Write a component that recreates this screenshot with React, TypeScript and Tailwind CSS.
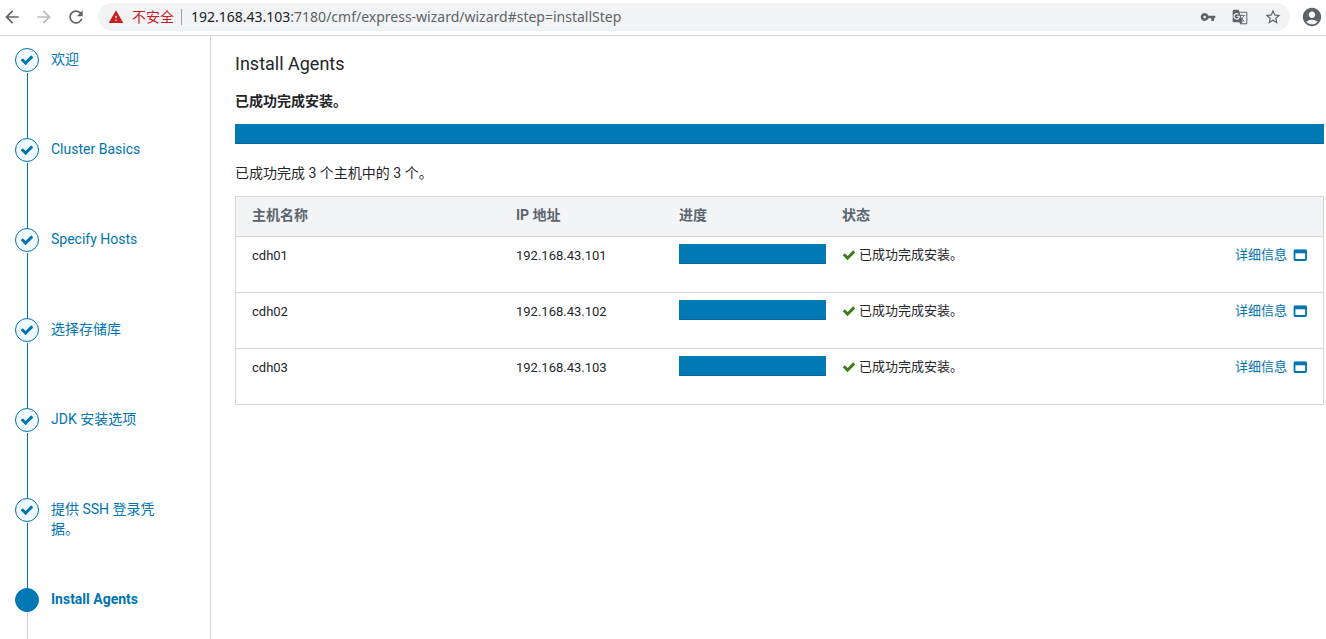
import {
  MdAccountCircle,
  MdArrowBack,
  MdArrowForward,
  MdGTranslate,
  MdRefresh,
  MdStarBorder,
  MdVpnKey,
  MdWarning,
} from "react-icons/md";
import clsx from "clsx";

const steps = [
  { label: "欢迎", done: true },
  { label: "Cluster Basics", done: true },
  { label: "Specify Hosts", done: true },
  { label: "选择存储库", done: true },
  { label: "JDK 安装选项", done: true },
  { label: "提供 SSH 登录凭据。", done: true },
  { label: "Install Agents", done: false },
];

const hosts = [
  { name: "cdh01", ip: "192.168.43.101", progress: 100, status: "已成功完成安装。" },
  { name: "cdh02", ip: "192.168.43.102", progress: 100, status: "已成功完成安装。" },
  { name: "cdh03", ip: "192.168.43.103", progress: 100, status: "已成功完成安装。" },
];

function CheckIcon({ className }: { className?: string }) {
  return (
    <svg className={clsx("size-3.5 shrink-0", className)} viewBox="0 0 1792 1792" fill="currentColor">
      <path d="M1671 566q0 40-28 68l-724 724-136 136q-28 28-68 28t-68-28l-136-136-362-362q-28-28-28-68t28-68l136-136q28-28 68-28t68 28l294 295 656-657q28-28 68-28t68 28l136 136q28 28 28 68z" />
    </svg>
  );
}

function WindowIcon() {
  return (
    <svg width="14" height="12" viewBox="0 0 14 12" fill="none">
      <rect x="1.5" y="1.5" width="11.5" height="9.5" rx="0.5" stroke="currentColor" strokeWidth="1.8" />
      <path d="M1 2.6h12.5" stroke="currentColor" strokeWidth="3.4" />
    </svg>
  );
}

function BrowserBar() {
  return (
    <header className="flex h-9 shrink-0 items-start border-b border-[#d5d7da] bg-white pt-[3px] pr-[3px] pl-0.5 text-[#5f6368]">
      <div className="flex h-7 w-24 shrink-0 items-center gap-3">
        <button type="button" aria-label="Back">
          <MdArrowBack size={20} />
        </button>
        <button type="button" aria-label="Forward" className="text-[#b9bbbe]">
          <MdArrowForward size={20} />
        </button>
        <button type="button" aria-label="Reload">
          <MdRefresh size={20} />
        </button>
      </div>
      <div className="flex h-7 min-w-0 flex-1 items-center rounded-full bg-[#f1f3f4] pr-2 pl-2.5 font-['Noto_Sans','Noto_Sans_CJK_SC',sans-serif] text-sm">
        <MdWarning size={16} className="shrink-0 text-[#c5221f]" />
        <span className="ml-2 shrink-0 text-[#c5221f]">不安全</span>
        <span className="mr-[9px] ml-[7px] h-4 w-px shrink-0 bg-[#9aa0a6]" />
        <p className="flex-1 truncate">
          <span className="text-[#202124]">192.168.43.103</span>
          :7180/cmf/express-wizard/wizard#step=installStep
        </p>
        <div className="flex shrink-0 items-center gap-4">
          <button type="button" aria-label="Passwords">
            <MdVpnKey size={16} />
          </button>
          <button type="button" aria-label="Translate">
            <MdGTranslate size={16} />
          </button>
          <button type="button" aria-label="Bookmark">
            <MdStarBorder size={18} />
          </button>
        </div>
      </div>
      <button type="button" aria-label="Profile" className="ml-[11px] flex h-7 items-center">
        <MdAccountCircle size={22} />
      </button>
    </header>
  );
}

function Sidebar() {
  return (
    <nav className="w-[211px] shrink-0 overflow-hidden border-r border-[#d5d7da] pt-3 pl-[15px]">
      <ol>
        {steps.map((step) => (
          <li key={step.label} className="flex h-[90px] gap-3">
            <div className="flex w-6 shrink-0 flex-col items-center">
              <span
                className={clsx(
                  "flex size-6 shrink-0 items-center justify-center rounded-full border border-[#0074b0] text-[#0074b0]",
                  step.done ? "bg-[#f0f9ff]" : "bg-[#0079b5]"
                )}
              >
                {step.done && <CheckIcon />}
              </span>
              <span className={clsx("mt-px w-px flex-1", step.done ? "bg-[#0074b0]" : "bg-[#cfd3d6]")} />
            </div>
            <a
              href="#step"
              className={clsx("w-28 pt-px text-sm leading-5 text-[#0074b0]", !step.done && "font-bold")}
            >
              {step.label}
            </a>
          </li>
        ))}
      </ol>
    </nav>
  );
}

function ProgressBar({ value, label }: { value: number; label: string }) {
  return (
    <div role="progressbar" aria-label={label} aria-valuenow={value} className="h-5 bg-[#f1f3f4]">
      <div className="h-full bg-[#0079b5] shadow-[inset_0_-1px_0_rgba(0,0,0,0.15)]" style={{ width: `${value}%` }} />
    </div>
  );
}

function HostTable() {
  return (
    <table className="mt-[13px] w-full table-fixed border-separate border-spacing-0 border border-b-0 border-[#d5d7da] text-left">
      <colgroup>
        <col className="w-[264px]" />
        <col className="w-[15%]" />
        <col className="w-[15%]" />
        <col />
        <col className="w-[16%]" />
      </colgroup>
      <thead className="bg-[#f2f4f5] text-sm text-[#5a656d]">
        <tr className="h-10 *:border-b *:border-[#d5d7da] *:pb-[3px] *:pl-4 *:font-bold">
          <th>主机名称</th>
          <th>IP 地址</th>
          <th>进度</th>
          <th colSpan={2}>状态</th>
        </tr>
      </thead>
      <tbody className="text-[13px] leading-5">
        {hosts.map((host) => (
          <tr key={host.name} className="h-14 align-top *:border-b *:border-[#d5d7da] *:pl-4">
            <td className="pt-[9px]">{host.name}</td>
            <td className="pt-[9px]">{host.ip}</td>
            <td className="pt-[7px]">
              <ProgressBar value={host.progress} label={host.name} />
            </td>
            <td className="pt-2">
              <span className="flex items-center gap-[3px]">
                <CheckIcon className="text-[#3a7d1e]" />
                {host.status}
              </span>
            </td>
            <td className="pt-2 pr-4">
              <a href="#details" className="flex items-center justify-end gap-1.5 text-[#0074b0]">
                详细信息
                <WindowIcon />
              </a>
            </td>
          </tr>
        ))}
      </tbody>
    </table>
  );
}

export default function App() {
  return (
    <div className="flex h-screen flex-col bg-white font-[Roboto,'Noto_Sans_CJK_SC',sans-serif] text-sm text-[#1f2529]">
      <BrowserBar />
      <div className="flex min-h-0 flex-1">
        <Sidebar />
        <main className="min-w-0 flex-1 overflow-auto pt-4 pr-0.5 pl-6">
          <h1 className="text-lg leading-6">Install Agents</h1>
          <p className="mt-[15px] mb-[13px] leading-5 font-bold">已成功完成安装。</p>
          <ProgressBar value={100} label="Install Agents" />
          <p className="mt-[19px] leading-5">已成功完成 3 个主机中的 3 个。</p>
          <HostTable />
        </main>
      </div>
    </div>
  );
}
